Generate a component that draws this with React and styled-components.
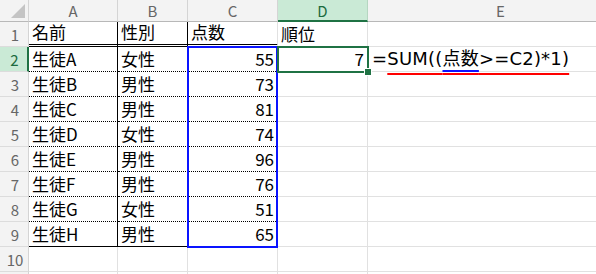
import styled, { createGlobalStyle } from "styled-components";

const GlobalStyle = createGlobalStyle`
  html, body {
    margin: 0;
    padding: 0;
    background: #fff;
    overflow: hidden;
  }
  body {
    font-family: "Noto Sans CJK JP", "Noto Sans", sans-serif;
  }
`;

const columns = ["A", "B", "C", "D", "E"];

const students = [
  ["生徒A", "女性", 55],
  ["生徒B", "男性", 73],
  ["生徒C", "男性", 81],
  ["生徒D", "女性", 74],
  ["生徒E", "男性", 96],
  ["生徒F", "男性", 76],
  ["生徒G", "女性", 51],
  ["生徒H", "男性", 65],
];

// grid lines: column 1 = row headers, 2..6 = A..E ; row 1 = column headers
const App = () => {
  const bodyRows = [["名前", "性別", "点数", "順位"], ...students, ["", "", "", ""], ["", "", "", ""]];

  return (
    <>
      <GlobalStyle />
      <Sheet>
        <Corner>
          <CornerMark />
        </Corner>
        {columns.map((c, j) => (
          <ColHeader key={c} $c={j + 2} $active={c === "D"}>
            {c}
          </ColHeader>
        ))}

        {bodyRows.map((row, i) => {
          const n = i + 1;
          const r = n + 1;
          const inTable = n <= 9;
          const bottom = !inTable ? "grid" : n === 1 ? "double" : n === 9 ? "solid" : "dotted";
          const side = inTable ? "solid" : "grid";
          return [
            <RowHeader key={`h${n}`} $r={r} $active={n === 2}>
              {n <= 10 ? n : ""}
            </RowHeader>,
            <Cell key={`a${n}`} $r={r} $c={2} $bottom={bottom} $right={side}>
              {row[0]}
            </Cell>,
            <Cell key={`b${n}`} $r={r} $c={3} $bottom={bottom} $right={side}>
              {row[1]}
            </Cell>,
            <Cell key={`c${n}`} $r={r} $c={4} $bottom={bottom} $align={n === 1 ? "left" : "right"}>
              {row[2]}
            </Cell>,
            <Cell key={`d${n}`} $r={r} $c={5} $align={n === 2 ? "right" : "left"}>
              {n === 1 ? row[3] : n === 2 ? 7 : ""}
            </Cell>,
            <Cell key={`e${n}`} $r={r} $c={6} $pad={4}>
              {n === 2 && (
                <Formula>
                  =<RefRange>SUM((<RefName>点数</RefName>&gt;=C2)*1)</RefRange>
                </Formula>
              )}
            </Cell>,
          ];
        })}

        <RangeBox />
        <ActiveCell>
          <FillHandle />
        </ActiveCell>
      </Sheet>
    </>
  );
};

const Sheet = styled.div`
  display: grid;
  grid-template-columns: 29px 89px 70px 90px 90px 266px;
  grid-template-rows: 22px repeat(11, 25px);
  width: 596px;
  height: 274px;
  overflow: hidden;
`;

const Corner = styled.div`
  grid-area: 1 / 1;
  position: relative;
  background: #f3f3f3;
  border-right: 1px solid #d4d4d4;
  border-bottom: 1px solid #b8b8b8;
`;

const CornerMark = styled.div`
  position: absolute;
  right: 3px;
  bottom: 3px;
  width: 0;
  height: 0;
  border-left: 14px solid transparent;
  border-bottom: 14px solid #c4c4c4;
`;

const ColHeader = styled.div`
  grid-area: 1 / ${(p) => p.$c};
  display: flex;
  align-items: center;
  justify-content: center;
  font-family: "Noto Sans CJK JP", sans-serif;
  font-size: 15px;
  color: ${(p) => (p.$active ? "#1c6b3f" : "#666")};
  background: ${(p) => (p.$active ? "#caead6" : "#f3f3f3")};
  border-right: 1px solid ${(p) => (p.$active ? "#b5d6c1" : "#d4d4d4")};
  border-bottom: ${(p) => (p.$active ? "2px solid #1f7244" : "1px solid #b8b8b8")};
  box-sizing: border-box;
  padding-top: ${(p) => (p.$active ? "1px" : "0")};
`;

const RowHeader = styled.div`
  grid-area: ${(p) => p.$r} / 1;
  display: flex;
  align-items: center;
  justify-content: center;
  padding-left: 2px;
  font-family: "Noto Sans CJK JP", sans-serif;
  font-size: 15px;
  color: ${(p) => (p.$active ? "#1c6b3f" : "#666")};
  background: ${(p) => (p.$active ? "#caead6" : "#f3f3f3")};
  border-right: ${(p) => (p.$active ? "2px solid #1f7244" : "1px solid #d4d4d4")};
  border-bottom: 1px solid #dcdcdc;
  box-sizing: border-box;
`;

const borderFor = (kind) => {
  switch (kind) {
    case "solid":
      return "1px solid #000";
    case "dotted":
      return "1px dotted #000";
    case "double":
      return "3px double #000";
    default:
      return "1px solid #e1e1e1";
  }
};

const Cell = styled.div`
  grid-area: ${(p) => p.$r} / ${(p) => p.$c};
  display: flex;
  align-items: flex-end;
  justify-content: ${(p) => (p.$align === "right" ? "flex-end" : "flex-start")};
  padding: 0 ${(p) => (p.$align === "right" ? 3 : 0)}px 2px ${(p) => p.$pad ?? 3}px;
  box-sizing: border-box;
  min-width: 0;
  white-space: nowrap;
  font-size: 17px;
  line-height: 20px;
  color: #000;
  border-right: ${(p) => borderFor(p.$right)};
  border-bottom: ${(p) => borderFor(p.$bottom)};
`;

const Formula = styled.span`
  font-family: "DejaVu Sans", "Noto Sans CJK JP", sans-serif;
  font-size: 18px;
  line-height: 20px;
  letter-spacing: 0.2px;
`;

const RefRange = styled.span`
  text-decoration: underline 2px #ff0000;
  text-underline-offset: 8px;
`;

const RefName = styled.span`
  text-decoration: underline 2px #1010ff;
  text-underline-offset: 5px;
`;

const RangeBox = styled.div`
  grid-area: 3 / 4 / 11 / 5;
  margin: -1px 0 -1px -1px;
  border: 2px solid #0a14ff;
  pointer-events: none;
  z-index: 1;
`;

const ActiveCell = styled.div`
  grid-area: 3 / 5;
  position: relative;
  margin: -1px;
  border: 2px solid #1f7244;
  pointer-events: none;
  z-index: 2;
`;

const FillHandle = styled.div`
  position: absolute;
  right: -5px;
  bottom: -5px;
  width: 6px;
  height: 6px;
  background: #1f7244;
  border: 1px solid #fff;
`;

export default App;
